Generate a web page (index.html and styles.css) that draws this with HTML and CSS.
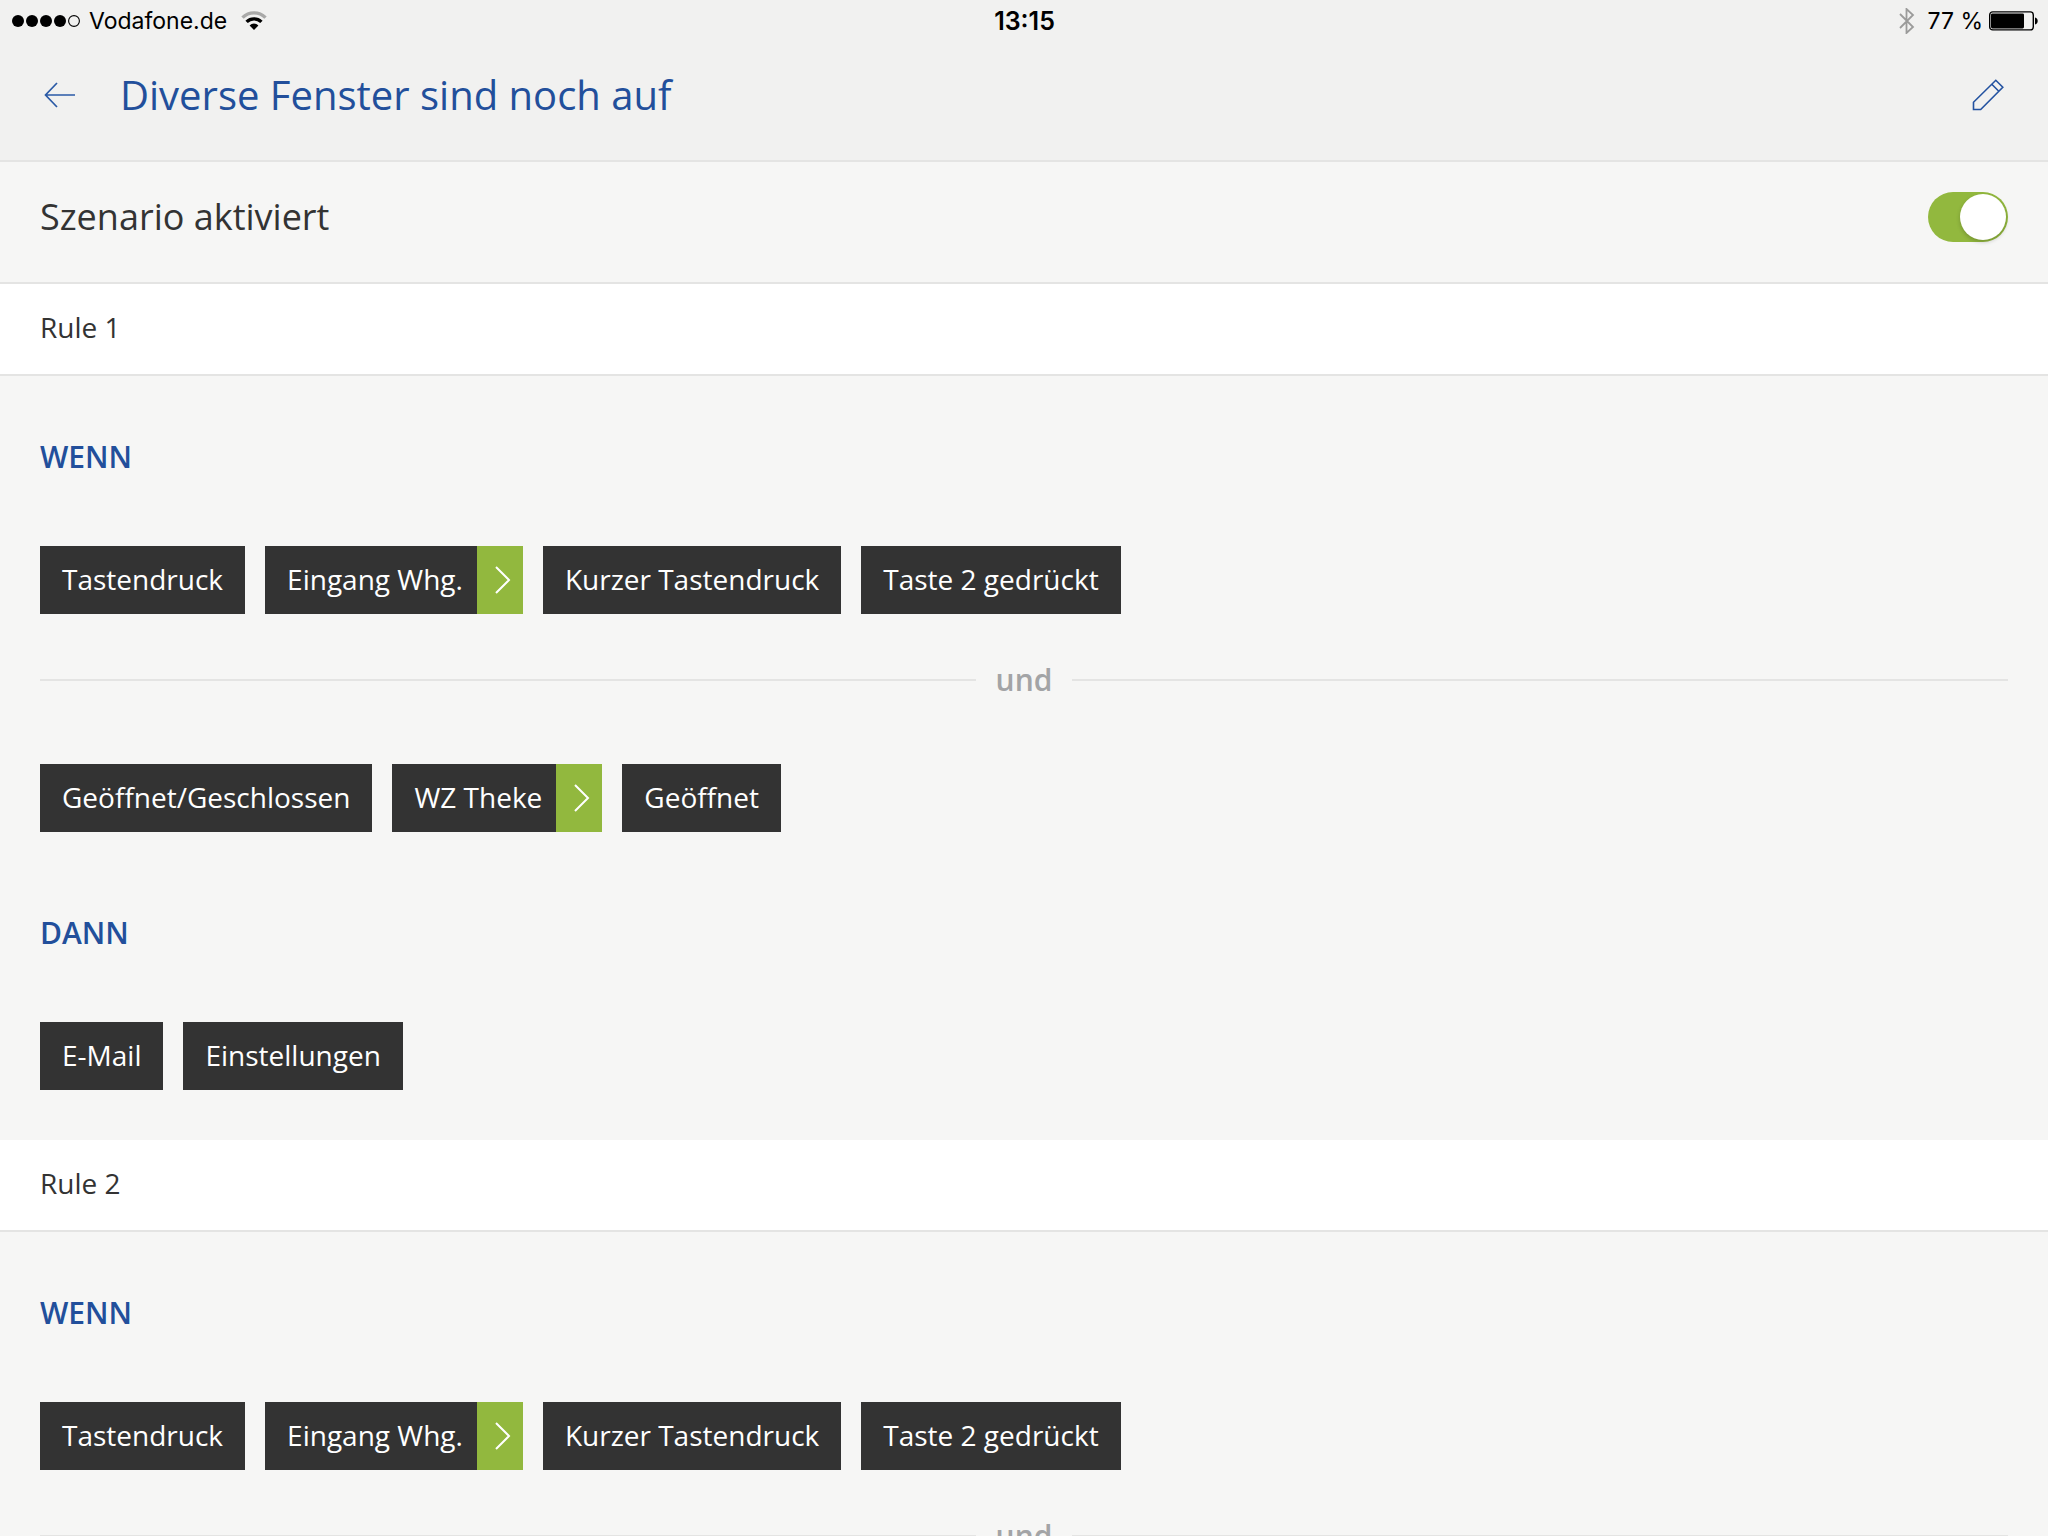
FILE: index.html
```html
<!DOCTYPE html>
<html lang="de">
<head>
  <meta charset="UTF-8" />
  <meta name="viewport" content="width=device-width, initial-scale=1.0"/>
  <title>Diverse Fenster sind noch auf</title>
  <link rel="stylesheet" href="styles.css">
</head>
<body>
  <header class="header">
    <div class="statusbar">
      <div class="status-left">
        <svg class="signal" width="70" height="14" viewBox="0 0 70 14">
          <circle cx="7" cy="7" r="6"/>
          <circle cx="21" cy="7" r="6"/>
          <circle cx="35" cy="7" r="6"/>
          <circle cx="49" cy="7" r="6"/>
          <circle cx="63" cy="7" r="5.4" fill="none" stroke="#000" stroke-width="1.1"/>
        </svg>
        <span>Vodafone.de</span>
        <svg class="wifi" width="26" height="20" viewBox="0 0 26 20">
          <path d="M1.5 6.6a16.3 16.3 0 0 1 23 0" fill="none" stroke="#a9a9a8" stroke-width="3.4"/>
          <path d="M5.6 10.9a10.6 10.6 0 0 1 14.8 0" fill="none" stroke="#000" stroke-width="3.4"/>
          <path d="M13 19l-4.4-4.6a6.2 6.2 0 0 1 8.8 0z"/>
        </svg>
      </div>
      <div class="time">13:15</div>
      <div class="status-right">
        <svg class="bluetooth" width="16" height="26" viewBox="0 0 16 26">
          <path d="M1 6l13 13-6.5 6V1L14 7 1 20" fill="none" stroke="#9b9b9a" stroke-width="1.8"/>
        </svg>
        <span>77 %</span>
        <svg class="battery" width="49" height="20" viewBox="0 0 49 20">
          <rect x="0.7" y="0.9" width="43.6" height="18" rx="3" fill="none" stroke="#000" stroke-width="1.4"/>
          <rect x="2" y="2.4" width="33" height="15" rx="1.4"/>
          <path d="M46 6.4c3.6.8 3.6 6.2 0 7z"/>
        </svg>
      </div>
    </div>
    <div class="titlebar">
      <button class="icon-btn" type="button" aria-label="Zurück">
        <svg width="32" height="26" viewBox="0 0 32 26">
          <path d="M13 1L1.5 13 13 25M1.5 13H31" fill="none" stroke="#2a5aa6" stroke-width="1.7"/>
        </svg>
      </button>
      <h1 class="title">Diverse Fenster sind noch auf</h1>
      <button class="icon-btn" type="button" aria-label="Bearbeiten">
        <svg width="32" height="32" viewBox="0 0 32 32">
          <path d="M1.5 30.5v-7.2L23.8 1.3l7 7L8.7 30.5zM19.8 5.3l7 7" fill="none" stroke="#2352a0" stroke-width="1.6"/>
        </svg>
      </button>
    </div>
  </header>

  <main class="content">
    <div class="active-row">
      <label for="active">Szenario aktiviert</label>
      <input class="switch" type="checkbox" id="active" checked>
    </div>

    <section class="rule">
      <h2 class="rule-name">Rule 1</h2>
      <div class="rule-body">
        <h3 class="block-name">WENN</h3>
        <div class="chips">
          <span class="chip">Tastendruck</span>
          <button class="chip chip-link" type="button">
            <span class="chip-text">Eingang Whg.</span>
            <span class="chip-arrow"><svg width="16" height="28" viewBox="0 0 16 28"><path d="M1 1l13 13L1 27"/></svg></span>
          </button>
          <span class="chip">Kurzer Tastendruck</span>
          <span class="chip">Taste 2 gedrückt</span>
        </div>
        <div class="divider">und</div>
        <div class="chips">
          <span class="chip">Geöffnet/Geschlossen</span>
          <button class="chip chip-link" type="button">
            <span class="chip-text">WZ Theke</span>
            <span class="chip-arrow"><svg width="16" height="28" viewBox="0 0 16 28"><path d="M1 1l13 13L1 27"/></svg></span>
          </button>
          <span class="chip">Geöffnet</span>
        </div>
        <h3 class="block-name block-then">DANN</h3>
        <div class="chips">
          <span class="chip">E-Mail</span>
          <span class="chip">Einstellungen</span>
        </div>
      </div>
    </section>

    <section class="rule">
      <h2 class="rule-name">Rule 2</h2>
      <div class="rule-body">
        <h3 class="block-name">WENN</h3>
        <div class="chips">
          <span class="chip">Tastendruck</span>
          <button class="chip chip-link" type="button">
            <span class="chip-text">Eingang Whg.</span>
            <span class="chip-arrow"><svg width="16" height="28" viewBox="0 0 16 28"><path d="M1 1l13 13L1 27"/></svg></span>
          </button>
          <span class="chip">Kurzer Tastendruck</span>
          <span class="chip">Taste 2 gedrückt</span>
        </div>
        <div class="divider">und</div>
      </div>
    </section>
  </main>
</body>
</html>
```
FILE: styles.css
```css
* {
  margin: 0; padding: 0; box-sizing: border-box;
}

body {
  height: 100vh;
  overflow: hidden;
  display: flex;
  flex-direction: column;
  background: #f6f6f5;
  color: #333;
  font-family: 'Open Sans', 'Noto Sans', sans-serif;
  font-size: 28px;
  font-kerning: normal;
  text-rendering: optimizeLegibility;
}

svg {
  display: block;
}

button {
  border: none;
  background: none;
  font: inherit;
  color: inherit;
  text-rendering: inherit;
  cursor: pointer;
}

/* header */
.header {
  flex: none;
  background: #f1f1f0;
  border-bottom: 2px solid #e4e4e3;
}

.statusbar {
  display: grid;
  grid-template-columns: 1fr auto 1fr;
  align-items: center;
  height: 40px;
  padding: 2px 10px 0 11px;
  font-family: Inter, 'Liberation Sans', sans-serif;
  font-size: 23px;
  line-height: 38px;
  color: #000;
}

.status-left, .status-right {
  display: flex;
  align-items: center;
}

.status-left {
  gap: 8px;
}

.status-right {
  justify-content: flex-end;
  gap: 6px;
}

.wifi {
  margin-left: 6px;
}

.bluetooth {
  margin-right: 6px;
}

.time {
  font-size: 25px;
  font-weight: 600;
}

.titlebar {
  display: flex;
  align-items: center;
  gap: 44px;
  height: 120px;
  padding: 0 44px 10px;
}

.title {
  flex: 1;
  font-size: 40px;
  font-weight: 400;
  line-height: 56px;
  color: #224f9b;
}

/* content */
.content {
  flex: 1;
  min-height: 0;
  overflow: hidden;
}

.active-row {
  display: flex;
  align-items: center;
  justify-content: space-between;
  padding: 30px 40px 40px;
  border-bottom: 2px solid #e4e4e3;
  font-size: 36px;
  line-height: 50px;
}

.switch {
  appearance: none;
  -webkit-appearance: none;
  display: flex;
  justify-content: flex-start;
  width: 80px;
  height: 50px;
  padding: 2px;
  border-radius: 25px;
  background: #c8c8c8;
  cursor: pointer;
}

.switch::before {
  content: '';
  width: 46px;
  height: 46px;
  border-radius: 50%;
  background: #fff;
  box-shadow: 0 2px 4px rgba(0, 0, 0, 0.2);
}

.switch:checked {
  justify-content: flex-end;
  background: #92b83e;
}

.rule-name {
  padding: 22px 40px 26px;
  background: #fff;
  border-bottom: 2px solid #e4e4e3;
  font-size: 28px;
  font-weight: 400;
  line-height: 42px;
}

.rule-body {
  padding: 60px 40px 50px;
}

.block-name {
  margin-bottom: 68px;
  font-size: 30px;
  font-weight: 600;
  line-height: 42px;
  color: #224f9b;
}

.block-then {
  margin-top: 80px;
}

.chips {
  display: flex;
  flex-wrap: wrap;
  gap: 20px;
}

.chip {
  padding: 0 22px 2px;
  background: #333;
  color: #fff;
  line-height: 66px;
}

.chip-link {
  display: flex;
  padding: 0;
}

.chip-text {
  padding: 0 14px 2px 22px;
}

.chip-arrow {
  display: flex;
  align-items: center;
  align-self: stretch;
  padding: 0 12px 0 18px;
  background: #92b83e;
}

.chip-arrow path {
  fill: none;
  stroke: #fff;
  stroke-width: 2;
}

.divider {
  display: flex;
  align-items: center;
  gap: 20px;
  margin: 45px 0 63px;
  font-size: 30px;
  font-weight: 600;
  line-height: 42px;
  color: #a3a4a6;
}

.divider::before, .divider::after {
  content: '';
  flex: 1;
  height: 2px;
  background: #e4e4e3;
}
```
